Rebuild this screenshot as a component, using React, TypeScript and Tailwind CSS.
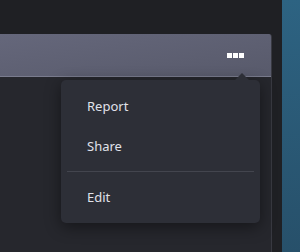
import React from "react";

export default function App() {
  const items = ["Report", "Share"];
  return (
    <div className="relative flex h-[252px] w-[300px] overflow-hidden bg-[#222328]" style={{ fontFamily: '"Noto Sans", "Open Sans", sans-serif' }}>
      <div className="flex w-[282px] flex-col pt-[34px] pr-[10px] bg-[#1f2024]">
        <div className="flex flex-1 flex-col overflow-hidden rounded-tr-[3px] bg-[#26272d] border-r border-[#383941]">
          <div className="relative flex h-[43px] items-center justify-end border-b border-[#7a7c8e] bg-gradient-to-br from-[#65677b] to-[#585a6b] pr-[27px]">
            <div className="flex gap-[1px]">
              <span className="h-[5px] w-[5px] bg-white" />
              <span className="h-[5px] w-[5px] bg-white" />
              <span className="h-[5px] w-[5px] bg-white" />
            </div>
          </div>
        </div>
      </div>
      <div className="flex-1 bg-gradient-to-b from-[#2d6382] to-[#27506a]" />

      <div className="absolute left-[61px] top-[80px] w-[199px] rounded-[5px] bg-[#2d2f37] pt-[7px] pb-[5px] shadow-[0_4px_16px_rgba(0,0,0,0.45)]">
        <div className="absolute -top-[7px] left-[174px] h-0 w-0 border-x-[7px] border-b-[7px] border-x-transparent border-b-[#2d2f37]" />
        {items.map((t) => (
          <div key={t} className="flex h-[40px] items-center pl-[26px] text-[13px] text-[#e0e2ea]">
            {t}
          </div>
        ))}
        <div className="mx-[6px] mt-[4px] mb-[6px] h-px bg-[#43454e]" />
        <div className="flex h-[40px] items-center pl-[26px] text-[13px] text-[#e0e2ea]">Edit</div>
      </div>
    </div>
  );
}
